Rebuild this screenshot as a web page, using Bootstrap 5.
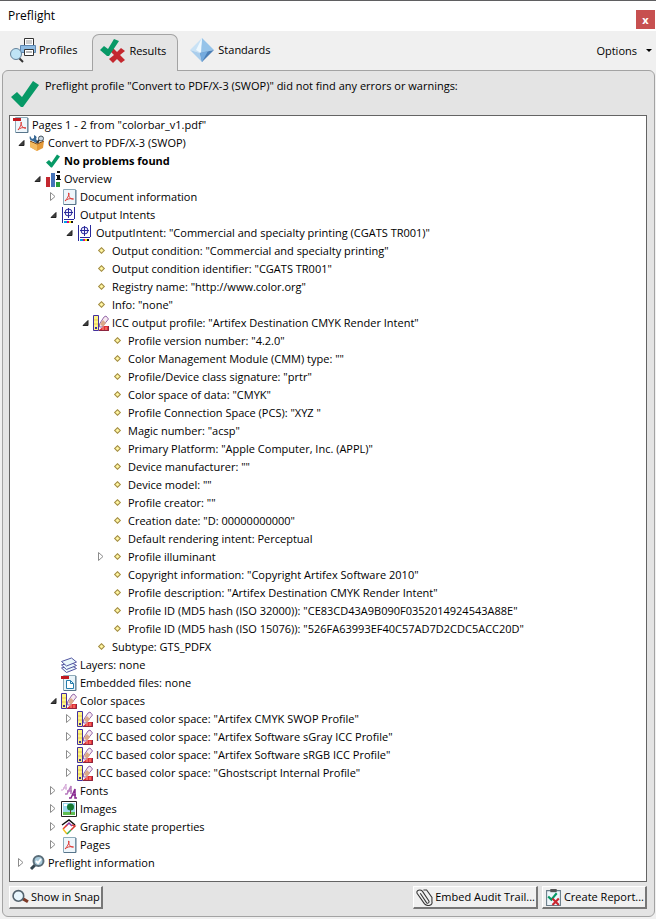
<!DOCTYPE html>
<html lang="en">
<head>
<meta charset="utf-8">
<meta name="viewport" content="width=device-width, initial-scale=1">
<title>Preflight</title>
<link rel="stylesheet" href="https://cdn.jsdelivr.net/npm/bootstrap@5.3.0/dist/css/bootstrap.min.css">
<style>
body{font:11px/18px "Open Sans","Noto Sans",sans-serif;color:#000;background:#f0f0f0;border-top:1px solid #5f5f61}
button{color:inherit;font:inherit}
h1{font-size:12px;line-height:18px}
.titlebar{height:30px;padding:6px 1px 0 8px}
.close-btn{width:19px;height:19px;background:#c75050;color:#fff;font-size:11px;font-weight:700;line-height:15px}
.toolbar{height:39px;padding:3px 0 0 2px;gap:3px}
.tab{height:35px;padding:0 11px 3px 7px;gap:3px;background:none;border:1px solid transparent}
.tab.active{background:#e4e4e4;border-color:#a3a3a3;border-bottom:0;border-radius:7px 7px 0 0;height:37px;padding-bottom:5px;z-index:1}
.options{gap:9px;padding:0 3px 2px 0}
.caret{border:3px solid transparent;border-top:3px solid #000;border-bottom:0;width:6px;height:3px}
.panel{background:#e4e4e4;border:1px solid #a3a3a3;border-radius:6px;margin:0 1px 2px 2px;padding:0 7px 7px 6px}
.summary{height:44px;gap:6px;padding:6px 0 0 2px}
.tree-box{background:#fff;border:1px solid #646464}
.tree{line-height:16px}
.tree ul{padding-left:16px}
.tree>li>ul{padding-left:7px}
.tree>li>.node{padding-left:3px}
.node{height:18px;padding:0 0 1px 12px;gap:3px;white-space:nowrap}
.node svg{width:16px;height:16px}
.node .tick-sm{padding:1px}
.twisty{width:12px;height:16px;margin:0 -3px 0 -12px}
.twisty svg{width:9px;height:9px}
.dot{display:grid;place-items:center;width:16px;height:16px}
.dot::before{content:"";width:5px;height:5px;background:#fff6a0;border:1px solid #a08a48;transform:rotate(45deg)}
.actions{gap:4px;padding-top:4px}
.push{height:23px;padding:0 1px 0 2px;gap:2px;background:#f0f0f0;border:1px solid #fff;border-right:2px solid #777;border-bottom:2px solid #777}
</style>
<script src="https://cdn.jsdelivr.net/npm/bootstrap@5.3.0/dist/js/bootstrap.bundle.min.js"></script>
</head>
<body class="d-flex flex-column min-vh-100">
<svg class="d-none" aria-hidden="true">
 <symbol id="open" viewBox="0 0 9 9"><path d="M7 2.500V7.500H2Z" fill="#404040" stroke="#222"/></symbol>
 <symbol id="shut" viewBox="0 0 9 9"><path d="M1.500 .5V8.500L6 4.500Z" fill="#fff" stroke="#8c8c8c"/></symbol>
 <symbol id="tick" viewBox="0 0 28 26"><path d="M0 16 6 11l5 5L22 0l6 4L12 26H10Z" fill="#079966"/></symbol>
 <symbol id="page" viewBox="0 0 16 16"><path d="M2.500 .5h12v15h-12z" fill="#eef6fb" stroke="#8eabba"/><path d="M3 15.500h12V1" fill="none" stroke="#58758b"/><path d="M7.500 4c1.500 0 0 4-3.500 8 2-2 5-3 8.500-2-3 .5-5-2-5-6Z" fill="none" stroke="#e03a36"/></symbol>
 <symbol id="pdf" viewBox="0 0 16 16"><path d="M2.500 .5h12v15h-12z" fill="#eef6fb" stroke="#8eabba"/><path d="M3 15.500h12V1" fill="none" stroke="#58758b"/><path d="M0 1h8v3H0z" fill="#c11920"/><path d="M8 5c1 0 0 4-3 8 2-2 4-3 8-2-3 .5-5-2-5-6Z" fill="none" stroke="#e03a36"/></symbol>
 <symbol id="embed" viewBox="0 0 16 16"><path d="M2.500 .5h12v15h-12z" fill="#e9f4fa" stroke="#8eabba"/><path d="M3 15.500h12V1" fill="none" stroke="#58758b"/><path d="M0 1h8v3H0z" fill="#c11920"/><path d="M5.500 5.500h4l3 3v5h-7zm4 0v3h3" fill="#fff" stroke="#267dad"/></symbol>
 <symbol id="box" viewBox="0 0 16 16"><path d="M1 6 8 9l7-3-1 7-6 3-7-4Z" fill="#e59a39"/><path d="m1 6 7 3v7l-7-4Z" fill="#f4ba60"/><path d="M1 6 8 9l7-3" fill="none" stroke="#7e4a16"/><path d="M1 1 3 4l2-1V0c3 1 3 3 2 4l3 4H7L4 6C1 6 0 3 1 1Z" fill="#386895"/><circle cx="12" cy="3.500" r="2.500" fill="#ccd8e2" stroke="#46535e"/><path d="m10 5-2 3" stroke="#333" stroke-width="2"/></symbol>
 <symbol id="chart" viewBox="0 0 16 16"><path d="M1 6h4v10H1z" fill="#c3272f"/><path d="M6 2h4v14H6z" fill="#4573ba"/><path d="M11 11h4v5h-4z" fill="#279b38"/><path d="M12 0h3v2h-3zm-1 4h4v4h1v1h-5V8h1V5h-1z" fill="#111"/></symbol>
 <symbol id="target" viewBox="0 0 16 16"><path d="M1.500 0v16M13.500 0v12M3 12.500h10" stroke="#29299a" fill="none"/><circle cx="7.500" cy="5.500" r="3.500" fill="#eef" stroke="#29299a"/><path d="M3 5.500h9M7.500 1v10" stroke="#29299a"/><path d="M3 14h3v2H3z" fill="#00a0e8"/><path d="M6 14h2v2H6z" fill="#e00080"/><path d="M8 14h2v2H8z" fill="#ffe600"/><path d="M10 14h2v2h-2z" fill="#111"/></symbol>
 <symbol id="swatch" viewBox="0 0 16 16"><path d="M6.500 9 11 2l2-1 2.500 3L9 12H6.500Z" fill="#f6e9f0" stroke="#966aaa"/><path d="m7 9 3-4 3 3-3 4Z" fill="#dba98a"/><path d="m6 15 5-4h5v5H6Z" fill="#df3038"/><path d="M6 15.500h9.500V11" fill="none" stroke="#8b2640"/><path d="M10 12v3m3-3v3" stroke="#ff9b83"/><path d="M.5 .5h5v15h-5z" fill="#fff486" stroke="#44309d"/><path d="M1 5h4M1 9h4" stroke="#e9ca4d"/><path d="M2 12h2v2H2z" fill="#44309d"/></symbol>
 <symbol id="layers" viewBox="0 0 16 16"><g fill="#eaf7fb" stroke="#5054a0"><path d="m.5 11 5 4.500 10-4-5-3Z"/><path d="m.5 8 5 4.500 10-4-5-3Z"/><path d="m.5 4.500 5 4.500 10-4-5-4Z"/></g></symbol>
 <symbol id="fonts" viewBox="0 0 16 16"><g fill="none"><path d="M0 7h2L5 1v6M2 5h4" stroke="#d2a4d5"/><path d="M4 11h2l4-8v8M6 8h5" stroke="#b678bd" stroke-width="1.500"/><path d="M8 15h2l4-9v9h2m-5-3h4" stroke="#87268f" stroke-width="1.500"/></g></symbol>
 <symbol id="image" viewBox="0 0 16 16"><path d="M.5 .5h15v15H.5z" fill="#fff" stroke="#222"/><path d="M2 2h12v12H2z" fill="#9bd9ed"/><path d="M2 11h12v3H2z" fill="#5ebd51"/><path d="M9 7h1v6H9z" fill="#673c1d"/><circle cx="9.500" cy="6" r="3.500" fill="#147731"/><path d="M3 4h3" stroke="#fff" stroke-width="2"/></symbol>
 <symbol id="gstate" viewBox="0 0 16 16"><g fill="none" stroke-width="1.500"><path d="m1 6 7-5 6 5" stroke="#111"/><path d="m5 7 3-3 3 3" stroke="#8a35a0"/><path d="m2 10 4-4" stroke="#e3382c"/><path d="m2 10 4 5" stroke="#f3bf23"/><path d="m6 15 4-4" stroke="#35a653"/><path d="m10 11 4-4-3-1" stroke="#d3342e"/></g></symbol>
 <symbol id="info" viewBox="0 0 16 16"><path d="m6 10-4 4" stroke="#34454f" stroke-width="3"/><circle cx="9.500" cy="6" r="5" fill="#a9cbdc" stroke="#5a6d79" stroke-width="2"/><path d="m7 6 2 2 3-4" fill="none" stroke="#fff" stroke-width="2"/></symbol>
 <symbol id="lens" viewBox="0 0 16 16"><path d="m10 9 5 3" stroke="#7c3826" stroke-width="3"/><circle cx="6" cy="6.500" r="5" fill="#e8f5fc" stroke="#53626d" stroke-width="1.500"/></symbol>
 <symbol id="clip" viewBox="0 0 16 16"><path d="M4 4l6 9c1 1 3 0 2-2L6 2C4 0 0 1 1 4l7 10c3 3 8 1 7-2V8L10 1H7" fill="none" stroke="#333"/></symbol>
 <symbol id="report" viewBox="0 0 16 16"><path d="M1.500 1.500h13v14h-13z" fill="#eef6fb" stroke="#687b87"/><path d="M5 0h6v3H5z" fill="#555"/><path d="m3 7 3 3 5-6" fill="none" stroke="#079966" stroke-width="2"/><path d="m7 9 6 6m0-6-6 6" stroke="#c92731" stroke-width="2"/></symbol>
</svg>

<header class="titlebar bg-white d-flex justify-content-between">
 <h1 class="m-0 fw-normal">Preflight</h1>
 <button class="close-btn border-0 p-0 align-self-center" type="button" aria-label="Close">x</button>
</header>

<nav class="toolbar d-flex align-items-start" aria-label="Preflight views">
 <button type="button" class="tab d-flex align-items-center">
  <svg width="26" height="25" viewBox="0 0 26 25" aria-hidden="true"><path d="M14.500 .5h9v7h-9z" fill="#fff" stroke="#333"/><path d="M16 3h6M16 5h6" stroke="#999"/><path d="M10.500 7.500h15v7h-15z" fill="#8ebbe2" stroke="#5d86b0"/><path d="M14.500 11.500h9v6h-9z" fill="#fff" stroke="#333"/><path d="M16 14h6" stroke="#777"/><path d="m9 20 4 4" stroke="#333" stroke-width="2"/><circle cx="6" cy="16" r="5.500" fill="#bfe4f6" stroke="#63819a"/></svg>
  <span>Profiles</span></button>
 <button type="button" class="tab active position-relative d-flex align-items-center" aria-current="page">
  <svg width="26" height="24" viewBox="0 0 26 24" aria-hidden="true"><path d="m10 12 3-3 4 4 4-4 4 3-5 4 5 5-4 3-4-4-4 4-4-4 5-4Z" fill="#c4272e"/><path d="m0 11 4-4 4 3 6-10 5 2L9 17H7Z" fill="#079966"/></svg>
  <span>Results</span></button>
 <button type="button" class="tab d-flex align-items-center">
  <svg width="26" height="25" viewBox="0 0 26 25" aria-hidden="true"><path d="M13 0 1 12l10 3Z" fill="#c9e2f5"/><path d="M13 0 11 15l14-3Z" fill="#95c3e9"/><path d="m13 0-6 12 5 3Z" fill="#eef8fe"/><path d="m1 12 12 12-2-9Z" fill="#a9cdec"/><path d="m11 15 2 9 12-12Z" fill="#4b7eb5"/><path d="m11 15 2 9 6-11Z" fill="#73aade"/></svg>
  <span>Standards</span></button>
 <button type="button" class="options tab ms-auto d-flex align-items-center"><span>Options</span><span class="caret"></span></button>
</nav>

<main class="panel d-flex flex-column flex-grow-1">
 <div class="summary d-flex">
  <svg class="mt-1" width="28" height="26" aria-hidden="true"><use href="#tick"/></svg>
  <span>Preflight profile "Convert to PDF/X-3 (SWOP)" did not find any errors or warnings:</span>
 </div>
 <div class="tree-box flex-grow-1 overflow-hidden">
 <ul class="tree list-unstyled m-0">
  <li><div class="node d-flex align-items-center"><svg><use href="#pdf"/></svg>Pages 1 - 2 from "colorbar_v1.pdf"</div>
  <ul class="list-unstyled">
   <li><div class="node d-flex align-items-center"><button type="button" class="twisty btn p-0 border-0 d-flex align-items-center" aria-label="Collapse"><svg><use href="#open"/></svg></button><svg><use href="#box"/></svg>Convert to PDF/X-3 (SWOP)</div>
   <ul class="list-unstyled">
    <li><div class="node d-flex align-items-center fw-bold"><svg class="tick-sm"><use href="#tick"/></svg>No problems found</div></li>
    <li><div class="node d-flex align-items-center"><button type="button" class="twisty btn p-0 border-0 d-flex align-items-center" aria-label="Collapse"><svg><use href="#open"/></svg></button><svg><use href="#chart"/></svg>Overview</div>
    <ul class="list-unstyled">
     <li><div class="node d-flex align-items-center"><button type="button" class="twisty btn p-0 border-0 d-flex align-items-center" aria-label="Expand"><svg><use href="#shut"/></svg></button><svg><use href="#page"/></svg>Document information</div></li>
     <li><div class="node d-flex align-items-center"><button type="button" class="twisty btn p-0 border-0 d-flex align-items-center" aria-label="Collapse"><svg><use href="#open"/></svg></button><svg><use href="#target"/></svg>Output Intents</div>
     <ul class="list-unstyled">
      <li><div class="node d-flex align-items-center"><button type="button" class="twisty btn p-0 border-0 d-flex align-items-center" aria-label="Collapse"><svg><use href="#open"/></svg></button><svg><use href="#target"/></svg>OutputIntent: "Commercial and specialty printing (CGATS TR001)"</div>
      <ul class="list-unstyled">
       <li class="node d-flex align-items-center"><span class="dot"></span>Output condition: "Commercial and specialty printing"</li>
       <li class="node d-flex align-items-center"><span class="dot"></span>Output condition identifier: "CGATS TR001"</li>
       <li class="node d-flex align-items-center"><span class="dot"></span>Registry name: "http://www.color.org"</li>
       <li class="node d-flex align-items-center"><span class="dot"></span>Info: "none"</li>
       <li><div class="node d-flex align-items-center"><button type="button" class="twisty btn p-0 border-0 d-flex align-items-center" aria-label="Collapse"><svg><use href="#open"/></svg></button><svg><use href="#swatch"/></svg>ICC output profile: "Artifex Destination CMYK Render Intent"</div>
       <ul class="list-unstyled">
        <li class="node d-flex align-items-center"><span class="dot"></span>Profile version number: "4.2.0"</li>
        <li class="node d-flex align-items-center"><span class="dot"></span>Color Management Module (CMM) type: ""</li>
        <li class="node d-flex align-items-center"><span class="dot"></span>Profile/Device class signature: "prtr"</li>
        <li class="node d-flex align-items-center"><span class="dot"></span>Color space of data: "CMYK"</li>
        <li class="node d-flex align-items-center"><span class="dot"></span>Profile Connection Space (PCS): "XYZ "</li>
        <li class="node d-flex align-items-center"><span class="dot"></span>Magic number: "acsp"</li>
        <li class="node d-flex align-items-center"><span class="dot"></span>Primary Platform: "Apple Computer, Inc. (APPL)"</li>
        <li class="node d-flex align-items-center"><span class="dot"></span>Device manufacturer: ""</li>
        <li class="node d-flex align-items-center"><span class="dot"></span>Device model: ""</li>
        <li class="node d-flex align-items-center"><span class="dot"></span>Profile creator: ""</li>
        <li class="node d-flex align-items-center"><span class="dot"></span>Creation date: "D: 00000000000"</li>
        <li class="node d-flex align-items-center"><span class="dot"></span>Default rendering intent: Perceptual</li>
        <li class="node d-flex align-items-center"><button type="button" class="twisty btn p-0 border-0 d-flex align-items-center" aria-label="Expand"><svg><use href="#shut"/></svg></button><span class="dot"></span>Profile illuminant</li>
        <li class="node d-flex align-items-center"><span class="dot"></span>Copyright information: "Copyright Artifex Software 2010"</li>
        <li class="node d-flex align-items-center"><span class="dot"></span>Profile description: "Artifex Destination CMYK Render Intent"</li>
        <li class="node d-flex align-items-center"><span class="dot"></span>Profile ID (MD5 hash (ISO 32000)): "CE83CD43A9B090F0352014924543A88E"</li>
        <li class="node d-flex align-items-center"><span class="dot"></span>Profile ID (MD5 hash (ISO 15076)): "526FA63993EF40C57AD7D2CDC5ACC20D"</li>
       </ul></li>
       <li class="node d-flex align-items-center"><span class="dot"></span>Subtype: GTS_PDFX</li>
      </ul></li>
     </ul></li>
     <li class="node d-flex align-items-center"><svg><use href="#layers"/></svg>Layers: none</li>
     <li class="node d-flex align-items-center"><svg><use href="#embed"/></svg>Embedded files: none</li>
     <li><div class="node d-flex align-items-center"><button type="button" class="twisty btn p-0 border-0 d-flex align-items-center" aria-label="Collapse"><svg><use href="#open"/></svg></button><svg><use href="#swatch"/></svg>Color spaces</div>
     <ul class="list-unstyled">
      <li class="node d-flex align-items-center"><button type="button" class="twisty btn p-0 border-0 d-flex align-items-center" aria-label="Expand"><svg><use href="#shut"/></svg></button><svg><use href="#swatch"/></svg>ICC based color space: "Artifex CMYK SWOP Profile"</li>
      <li class="node d-flex align-items-center"><button type="button" class="twisty btn p-0 border-0 d-flex align-items-center" aria-label="Expand"><svg><use href="#shut"/></svg></button><svg><use href="#swatch"/></svg>ICC based color space: "Artifex Software sGray ICC Profile"</li>
      <li class="node d-flex align-items-center"><button type="button" class="twisty btn p-0 border-0 d-flex align-items-center" aria-label="Expand"><svg><use href="#shut"/></svg></button><svg><use href="#swatch"/></svg>ICC based color space: "Artifex Software sRGB ICC Profile"</li>
      <li class="node d-flex align-items-center"><button type="button" class="twisty btn p-0 border-0 d-flex align-items-center" aria-label="Expand"><svg><use href="#shut"/></svg></button><svg><use href="#swatch"/></svg>ICC based color space: "Ghostscript Internal Profile"</li>
     </ul></li>
     <li class="node d-flex align-items-center"><button type="button" class="twisty btn p-0 border-0 d-flex align-items-center" aria-label="Expand"><svg><use href="#shut"/></svg></button><svg><use href="#fonts"/></svg>Fonts</li>
     <li class="node d-flex align-items-center"><button type="button" class="twisty btn p-0 border-0 d-flex align-items-center" aria-label="Expand"><svg><use href="#shut"/></svg></button><svg><use href="#image"/></svg>Images</li>
     <li class="node d-flex align-items-center"><button type="button" class="twisty btn p-0 border-0 d-flex align-items-center" aria-label="Expand"><svg><use href="#shut"/></svg></button><svg><use href="#gstate"/></svg>Graphic state properties</li>
     <li class="node d-flex align-items-center"><button type="button" class="twisty btn p-0 border-0 d-flex align-items-center" aria-label="Expand"><svg><use href="#shut"/></svg></button><svg><use href="#page"/></svg>Pages</li>
    </ul></li>
   </ul></li>
   <li class="node d-flex align-items-center"><button type="button" class="twisty btn p-0 border-0 d-flex align-items-center" aria-label="Expand"><svg><use href="#shut"/></svg></button><svg><use href="#info"/></svg>Preflight information</li>
  </ul></li>
 </ul>
 </div>
 <div class="actions d-flex">
  <button type="button" class="push d-flex align-items-center me-auto"><svg width="17" height="17"><use href="#lens"/></svg>Show in Snap</button>
  <button type="button" class="push d-flex align-items-center"><svg width="17" height="17"><use href="#clip"/></svg>Embed Audit Trail...</button>
  <button type="button" class="push d-flex align-items-center"><svg width="17" height="17"><use href="#report"/></svg>Create Report...</button>
 </div>
</main>
</body>
</html>
